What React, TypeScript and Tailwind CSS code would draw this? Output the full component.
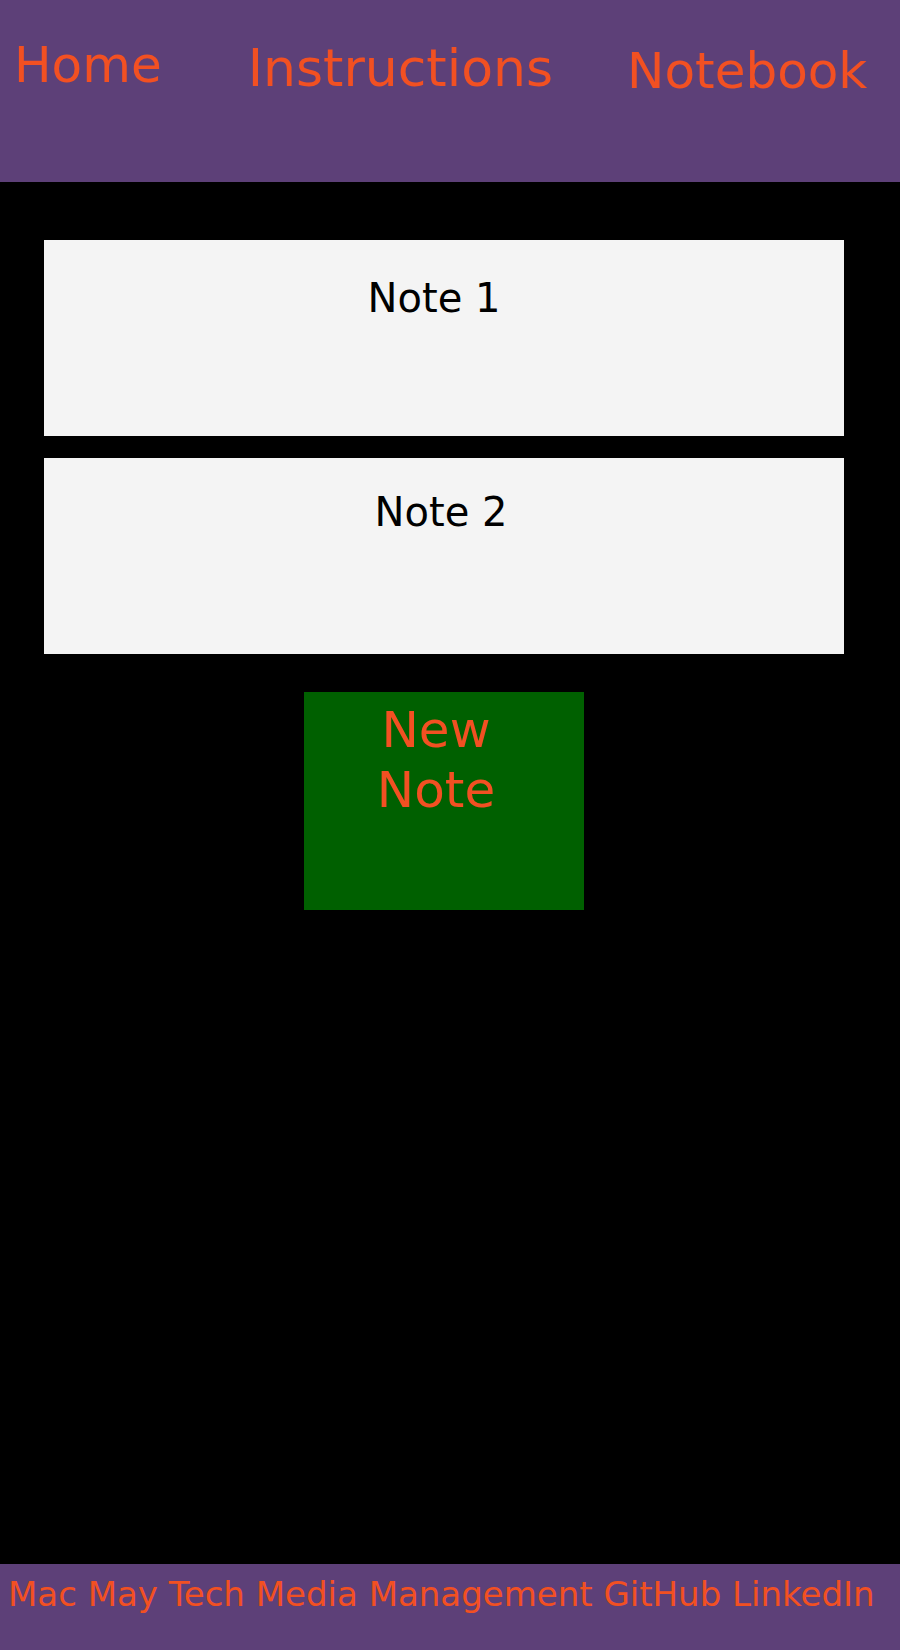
const NAV = [
  { label: 'Home', cls: 'ml-[14px] mt-[36px] text-[50px]' },
  { label: 'Instructions', cls: 'ml-[86px] mt-[38px] text-[52px]' },
  { label: 'Notebook', cls: 'ml-[74px] mt-[42px] text-[50px]' },
]

// small per-note offsets, as in the original
const NOTES = [
  { title: 'Note 1', cls: 'pt-[35px] pr-[20px]' },
  { title: 'Note 2', cls: 'pt-[31px] pr-[6px]' },
]

export default function App() {
  return (
    <div className="flex min-h-[1650px] flex-col bg-black font-['DejaVu_Sans',sans-serif]">
      <header className="flex h-[182px] items-start bg-[#5d4078]">
        {NAV.map((n) => (
          <a key={n.label} href="#" className={`leading-[normal] text-[#f25022] ${n.cls}`}>
            {n.label}
          </a>
        ))}
      </header>

      <main className="ml-[44px] flex w-[800px] flex-col items-center pt-[58px]">
        <div className="flex w-full flex-col gap-[22px]">
          {NOTES.map((n) => (
            <div key={n.title} className={`h-[196px] bg-[#f4f4f4] text-center ${n.cls}`}>
              <p className="text-[40px] leading-[normal] text-black">{n.title}</p>
            </div>
          ))}
        </div>
        <div
          role="button"
          className="mt-[38px] h-[218px] w-[280px] cursor-pointer bg-[#006000] pt-[8px] pr-[16px] text-center text-[50px] leading-[60px] text-[#f25022]"
        >
          <span className="block">New</span>
          <span className="block">Note</span>
        </div>
      </main>

      <footer className="mt-auto h-[86px] bg-[#5d4078] pl-[8px] pt-[10px] text-[34px] leading-[normal] text-[#f25022]">
        Mac May Tech Media Management GitHub LinkedIn
      </footer>
    </div>
  )
}
